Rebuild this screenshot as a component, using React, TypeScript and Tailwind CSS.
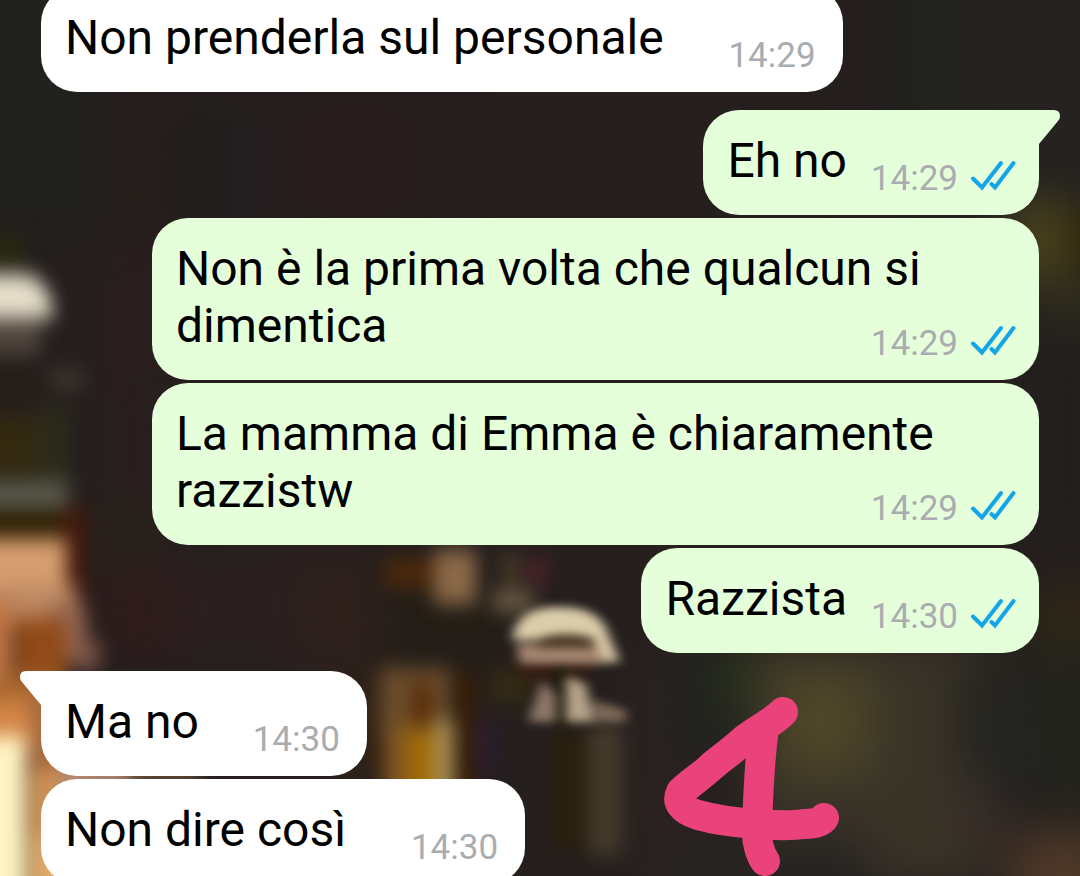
type Message = {
  id: number;
  text: string;
  time: string;
  sent?: boolean;
  tail?: boolean;
  // room kept free after the last word so the time never covers it
  spacer: string;
};

const messages: Message[] = [
  { id: 1, text: 'Non prenderla sul personale', time: '14:29', spacer: 'w-[155px]' },
  { id: 2, text: 'Eh no', time: '14:29', sent: true, tail: true, spacer: 'w-[168px]' },
  { id: 3, text: 'Non è la prima volta che qualcun si dimentica', time: '14:29', sent: true, spacer: 'w-[168px]' },
  { id: 4, text: 'La mamma di Emma è chiaramente razzistw', time: '14:29', sent: true, spacer: 'w-[168px]' },
  { id: 5, text: 'Razzista', time: '14:30', sent: true, spacer: 'w-[168px]' },
  { id: 6, text: 'Ma no', time: '14:30', tail: true, spacer: 'w-[144px]' },
  { id: 7, text: 'Non dire così', time: '14:30', spacer: 'w-[155px]' },
];

// x, y, width, height, colour
type Patch = [number, number, number, number, string];

const softPatches: Patch[] = [
  [-60, -60, 160, 290, '#21211e'],
  [110, 100, 60, 300, '#281e1c'],
  [175, 120, 45, 100, '#1f1e19'],
  [222, 120, 50, 100, '#251f22'],
  [280, 90, 160, 140, '#281e1d'],
  [880, -60, 90, 280, '#22221e'],
  [970, -60, 180, 260, '#25221f'],
  [1010, 200, 60, 80, '#4a441f'],
  [1066, 215, 50, 45, '#332806'],
  [1040, 275, 60, 50, '#2f2d1c'],
  [1040, 340, 60, 200, '#221f1d'],
  [1030, 590, 90, 50, '#302815'],
  [100, 250, 60, 250, '#2a1f1f'],
  [90, 500, 70, 70, '#2a221c'],
  [100, 570, 80, 90, '#301c1c'],
  [180, 550, 190, 110, '#2b2020'],
  [300, 560, 80, 110, '#30211c'],
  [390, 590, 120, 70, '#231e15'],
  [360, 680, 30, 110, '#3f260e'],
  [630, 650, 60, 240, '#2d2222'],
  [665, 650, 80, 110, '#22231f'],
  [720, 645, 34, 60, '#253419'],
  [750, 640, 240, 240, '#3a3428'],
  [775, 670, 95, 100, '#4d4628'],
  [955, 660, 75, 120, '#27251f'],
  [990, 700, 50, 90, '#232423'],
  [1035, 640, 80, 170, '#24241d'],
  [950, 785, 50, 50, '#392e29'],
  [650, 835, 220, 60, '#282421'],
  [1010, 830, 110, 100, '#4d3828'],
];

const patches: Patch[] = [
  // left side, top to bottom
  [-30, 236, 55, 30, '#28280f'],
  [-30, 318, 70, 36, '#51463e'],
  [-30, 360, 70, 45, '#261e1a'],
  [50, 370, 34, 18, '#40372e'],
  [-30, 415, 76, 60, '#33290f'],
  [35, 405, 35, 80, '#2c2a1b'],
  [-30, 480, 98, 30, '#58584b'],
  [-30, 510, 100, 28, '#2a1c00'],
  [62, 508, 24, 90, '#431a0d'],
  [-40, 538, 106, 62, '#d69e70'],
  [-10, 585, 86, 40, '#bd8862'],
  [50, 604, 36, 60, '#946652'],
  [76, 640, 24, 30, '#7a5548'],
  [-40, 600, 52, 80, '#c07545'],
  [16, 618, 50, 75, '#914a18'],
  [-40, 675, 100, 50, '#a9672f'],
  [-40, 700, 70, 50, '#d28445'],
  [30, 690, 60, 110, '#a8693d'],
  [30, 770, 34, 130, '#cf9355'],
  [30, 835, 60, 60, '#e3ac6a'],
  [60, 762, 80, 30, '#b88c78'],
  [130, 762, 70, 28, '#5c4a36'],
  [-50, 736, 76, 170, '#fff4c2'],
  // small lights in the middle
  [385, 558, 50, 30, '#4b280b'],
  [434, 550, 42, 54, '#8c6a48'],
  [500, 552, 22, 40, '#433425'],
  [528, 558, 20, 26, '#50222a'],
  [492, 594, 42, 16, '#7a6850'],
  // jars
  [380, 668, 70, 62, '#6a4d2c'],
  [412, 684, 20, 42, '#592b06'],
  [384, 725, 36, 80, '#805722'],
  [408, 730, 32, 80, '#a06c05'],
  [434, 720, 20, 80, '#a88f58'],
  [455, 670, 22, 130, '#341f08'],
  [476, 715, 18, 60, '#2e1d30'],
  // mushroom shade and stems
  [490, 670, 40, 34, '#332b14'],
  [520, 660, 70, 16, '#3d1a0a'],
  [552, 730, 34, 120, '#2a200f'],
  [588, 725, 34, 130, '#443a2b'],
];

function Backdrop() {
  return (
    <svg
      aria-hidden="true"
      className="absolute inset-0 h-full w-full"
      viewBox="0 0 1080 876"
      preserveAspectRatio="xMidYMid slice"
      colorInterpolationFilters="sRGB"
    >
      <defs>
        <filter id="haze" x="-20%" y="-20%" width="140%" height="140%">
          <feGaussianBlur stdDeviation="22" />
        </filter>
        <filter id="soft" x="-20%" y="-20%" width="140%" height="140%">
          <feGaussianBlur stdDeviation="9 10" />
        </filter>
        <filter id="near" x="-20%" y="-20%" width="140%" height="140%">
          <feGaussianBlur stdDeviation="6 5" />
        </filter>
      </defs>
      <rect width="1080" height="876" fill="#251f1e" />
      <g filter="url(#haze)">
        {softPatches.map(([x, y, w, h, fill], i) => (
          <rect key={i} x={x} y={y} width={w} height={h} fill={fill} />
        ))}
      </g>
      <g filter="url(#soft)">
        {patches.map(([x, y, w, h, fill], i) => (
          <rect key={i} x={x} y={y} width={w} height={h} fill={fill} />
        ))}
        <path d="M-40 274H26Q50 280 54 318H-40Z" fill="#e6dfcb" />
      </g>
      <g filter="url(#near)">
        <path d="M512 640Q516 606 560 607Q602 607 609 636L620 662H598L594 640Z" fill="#dccdaa" />
        <path d="M516 644H596L606 664H520Z" fill="#a48670" />
        <path d="M540 638Q564 630 594 638V648H538Z" fill="#4a3824" />
        <path d="M528 722L542 680L560 700V722Z" fill="#8d7868" />
        <path d="M566 676L586 684L594 722H566Z" fill="#b5a48a" />
        <path d="M592 700L626 710V722H596Z" fill="#7d6a59" />
        <rect x="556" y="666" width="10" height="64" fill="#1e1a0c" />
      </g>
    </svg>
  );
}

function ReadTicks() {
  return (
    <svg
      role="img"
      aria-label="Letto"
      width="46"
      height="38"
      viewBox="0 0 46 38"
      fill="none"
      stroke="#12a5e8"
      strokeWidth="4"
      strokeLinecap="round"
      strokeLinejoin="miter"
    >
      <path d="M3 18.5L12 27.5L31 3" />
      <path d="M21.5 24L25 27.5L43.5 3" />
    </svg>
  );
}

function Tail({ sent }: { sent?: boolean }) {
  return (
    <svg
      aria-hidden="true"
      width="44"
      height="34"
      viewBox="0 0 44 34"
      className={sent ? 'absolute top-0 left-full -ml-[22px] fill-[#e5ffdb]' : 'absolute top-0 right-full -mr-[22px] fill-white'}
    >
      {sent ? (
        <path d="M0 0H37Q43 0 43 6Q43 9 41 11L22 34L0 34Z" />
      ) : (
        <path d="M44 0H7Q1 0 1 6Q1 9 3 11L22 34L44 34Z" />
      )}
    </svg>
  );
}

function Bubble({ message }: { message: Message }) {
  const { text, time, sent, tail, spacer } = message;
  const side = sent ? 'self-end bg-[#e5ffdb]' : 'self-start bg-white';
  const corner = !tail ? '' : sent ? 'rounded-tr-none' : 'rounded-tl-none';

  return (
    <li className={`relative max-w-[887px] rounded-[36px] px-6 pt-[22px] pb-[26px] ${side} ${corner}`}>
      {tail && <Tail sent={sent} />}
      <p className="relative text-[48px] leading-[57px] text-black">
        {text}
        <span aria-hidden="true" className={`inline-block h-px ${spacer}`} />
      </p>
      <div className={`absolute bottom-[15px] flex items-center gap-3 ${sent ? 'right-[23px]' : 'right-[27px]'}`}>
        <time className="text-[35px] leading-[42px] text-[#a9adb0]">{time}</time>
        {sent && <ReadTicks />}
      </div>
    </li>
  );
}

function Doodle() {
  return (
    <svg
      role="img"
      aria-label="Numero quattro disegnato a mano"
      width="176"
      height="180"
      viewBox="0 0 176 180"
      className="absolute right-[240px] bottom-0"
      fill="none"
      stroke="#ea427b"
      strokeWidth="30"
      strokeLinecap="round"
      strokeLinejoin="round"
    >
      <path d="M119 16C112 24 96 32 81 43C67 56 61 59 48 70C38 80 24 88 17 96C12 106 18 114 34 119C66 128 120 131 140 128C152 128 158 125 160 122" />
      <path d="M100 31C96 62 94 92 93 138C93 146 96 158 101 165" />
    </svg>
  );
}

export default function App() {
  return (
    <main className="relative h-screen overflow-hidden bg-[#251f1e] font-['Roboto',sans-serif]">
      <Backdrop />
      <ol className="relative -mt-[13px] flex flex-col gap-[3px] px-[41px]">
        {messages.map((message) =>
          message.tail ? (
            <li key={message.id} className="pt-[15px]">
              <ol className="flex flex-col">
                <Bubble message={message} />
              </ol>
            </li>
          ) : (
            <Bubble key={message.id} message={message} />
          ),
        )}
      </ol>
      <Doodle />
    </main>
  );
}
